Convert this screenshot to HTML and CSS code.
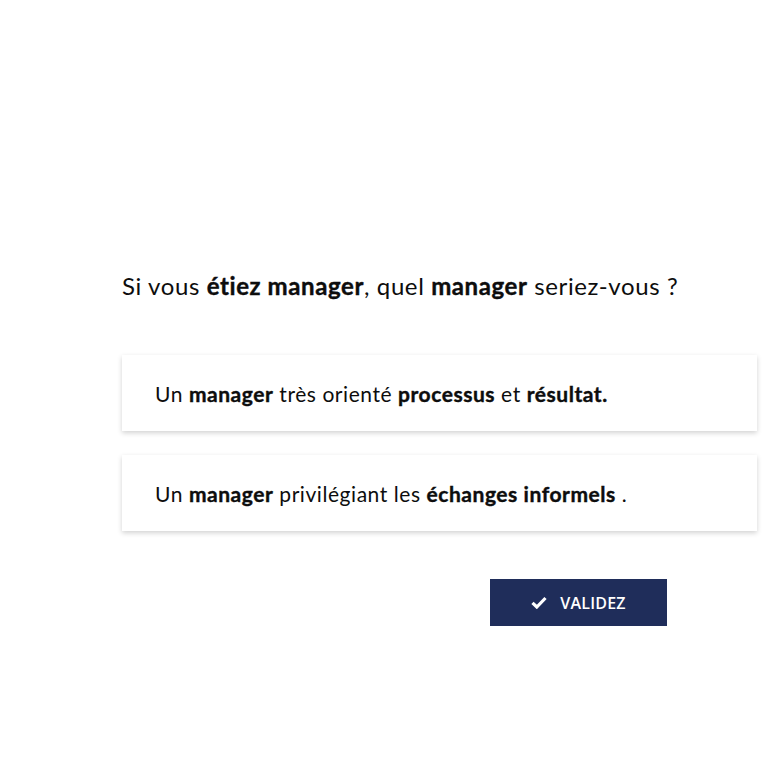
FILE: index.html
```html
<!DOCTYPE html>
<html lang="fr">
<head>
    <meta charset="UTF-8">
    <meta name="viewport" content="width=device-width, initial-scale=1.0">
    <title>Quiz manager</title>
    <link rel="stylesheet" href="styles.css">
</head>
<body>
    <div class="quiz">
        <h2 class="question">Si vous <b>étiez manager</b>, quel <b>manager</b> seriez-vous ?</h2>
        <div class="answers">
            <div class="answer"><span>Un <b>manager</b> très orienté <b>processus</b> et <b>résultat.</b></span></div>
            <div class="answer"><span>Un <b>manager</b> privilégiant les <b>échanges informels</b> .</span></div>
        </div>
        <div class="actions">
            <button class="validate">
                <svg width="16" height="13" viewBox="0 0 16 13"><path d="M1.5 6.8 L5.8 11 L14.5 2" fill="none" stroke="#fff" stroke-width="3.2"/></svg>
                VALIDEZ
            </button>
        </div>
    </div>
</body>
</html>
```

FILE: styles.css
```css
body {
    margin: 0;
    background: #ffffff;
    font-family: Lato, "Open Sans", sans-serif;
    color: #0d0d0d;
}
.quiz {
    margin-left: 122px;
    width: 635px;
    padding-top: 270px;
}
.question {
    margin: 0;
    font-size: 24px;
    font-weight: 400;
    line-height: 32px;
    letter-spacing: 0.6px;
}
.question b, .answer b {
    font-weight: 700;
    -webkit-text-stroke: 0.4px #0d0d0d;
}
.answers {
    display: flex;
    flex-direction: column;
    gap: 24px;
    margin-top: 53px;
}
.answer {
    height: 76px;
    display: flex;
    align-items: center;
    padding-left: 33px;
    font-size: 21px;
    letter-spacing: 0.55px;
    background: #ffffff;
    box-shadow: 0px 2px 5px rgba(0, 0, 0, 0.18);
}
.actions {
    display: flex;
    margin-top: 48px;
    padding-left: 368px;
}
.validate {
    width: 177px;
    height: 47px;
    display: flex;
    align-items: center;
    justify-content: center;
    gap: 13px;
    background: #1f2d5a;
    color: #ffffff;
    border: none;
    font-family: "Open Sans", sans-serif;
    font-weight: 600;
    font-size: 16px;
    letter-spacing: 0.2px;
    cursor: pointer;
}
```
